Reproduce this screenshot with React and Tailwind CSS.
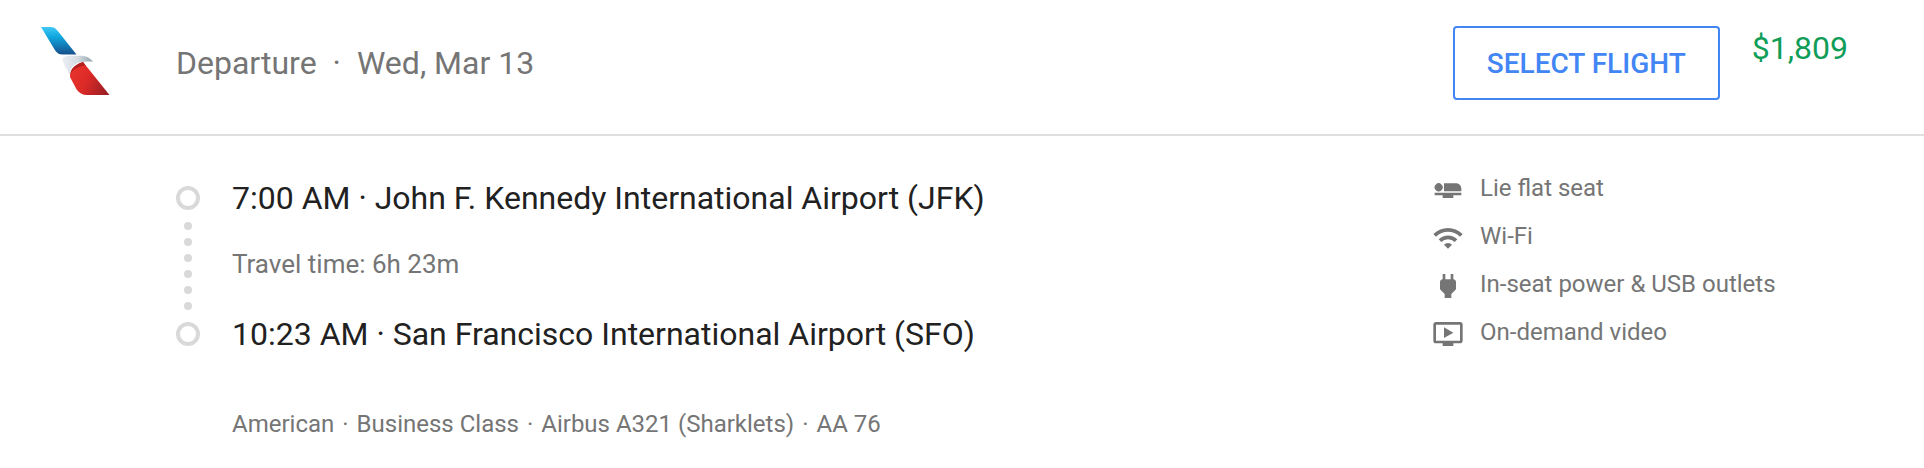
import React from "react";
import {
  MdAirlineSeatFlat,
  MdOndemandVideo,
  MdPower,
  MdWifi,
} from "react-icons/md";

const flight = {
  date: "Wed, Mar 13",
  price: "$1,809",
  departure: "7:00 AM · John F. Kennedy International Airport (JFK)",
  duration: "Travel time: 6h 23m",
  arrival: "10:23 AM · San Francisco International Airport (SFO)",
  details: ["American", "Business Class", "Airbus A321 (Sharklets)", "AA 76"],
};

const amenities = [
  { label: "Lie flat seat", icon: MdAirlineSeatFlat },
  { label: "Wi-Fi", icon: MdWifi },
  { label: "In-seat power & USB outlets", icon: MdPower },
  { label: "On-demand video", icon: MdOndemandVideo },
];

const AirlineLogo = () => (
  <svg
    viewBox="0 0 70 70"
    className="w-[70px] h-[70px] shrink-0"
    role="img"
    aria-label="American Airlines"
  >
    <defs>
      <linearGradient id="blue" x1="0" y1="0" x2="0" y2="1">
        <stop offset="0" stopColor="#3fc8f4" />
        <stop offset="0.35" stopColor="#10a8e0" />
        <stop offset="1" stopColor="#164f8c" />
      </linearGradient>
      <linearGradient id="silver" x1="0" y1="0" x2="1" y2="0">
        <stop offset="0" stopColor="#e9eef3" />
        <stop offset="0.5" stopColor="#d5dde3" />
        <stop offset="1" stopColor="#90a2aa" />
      </linearGradient>
      <linearGradient id="red" x1="0" y1="0.3" x2="1" y2="0.7">
        <stop offset="0" stopColor="#e8332c" />
        <stop offset="0.45" stopColor="#dc2a27" />
        <stop offset="1" stopColor="#9c1f24" />
      </linearGradient>
    </defs>
    <path
      d="M1 1h9.500c3.200 0 5.500 1.500 7.500 4.300L36.500 28.500H22.500c-3.500 0-5.600-1.400-7.500-4.200z"
      fill="url(#blue)"
    />
    <path
      d="M43 36L69.500 69H47c-4.500 0-8-2-10.500-5.800L30 51c-.6-7 5-12 13-15z"
      fill="url(#red)"
    />
    <path d="M30 49c1-7 5.500-11 13-13l2.500 3.500C37 40.500 32 44 30 49z" fill="#b3201f" />
    <path
      d="M22.500 33.500c0-2.500 3-3.800 8.500-3.800h9c6 0 10 2 13 6-7-.5-14-.2-18 2.800-3.500 2.500-5 6-5 10.500l-6.300-11.500c-.8-1.500-1.200-2.700-1.200-4z"
      fill="url(#silver)"
    />
  </svg>
);

const Stop = () => (
  <span className="size-6 rounded-full border-4 border-[#d9d9d9]"></span>
);

const App = () => {
  return (
    <main className="min-h-screen bg-white font-[Roboto,sans-serif] text-[#757575]">
      {/* Header */}
      <header className="flex items-start border-b-2 border-[#e0e0e0] pt-[26px] pb-[34px] pl-10 pr-[76px]">
        <AirlineLogo />
        <h2 className="ml-[66px] mt-[17px] flex gap-4 text-[32px] leading-10">
          <span>Departure</span>
          <span>·</span>
          <span>{flight.date}</span>
        </h2>
        <button
          type="button"
          className="ml-auto cursor-pointer rounded border-2 border-[#4285f4] px-8 pt-4 pb-3.5 text-[28px] leading-10 font-medium text-[#4285f4]"
        >
          SELECT FLIGHT
        </button>
        <p className="ml-8 mt-0.5 text-[32px] leading-10 text-[#0f9d58]">
          {flight.price}
        </p>
      </header>

      {/* Flight leg */}
      <section className="flex items-start pt-[38px] pl-44 pr-10">
        <div className="mt-3 flex flex-col items-center gap-3">
          <Stop />
          <div className="flex flex-col gap-2">
            {[...Array(6)].map((_, i) => (
              <span key={i} className="size-2 rounded-full bg-[#d9d9d9]"></span>
            ))}
          </div>
          <Stop />
        </div>

        <div className="ml-8 mt-1 flex-1">
          <h3 className="text-[32px] leading-10 text-[#212121]">{flight.departure}</h3>
          <p className="mt-[30px] mb-[34px] text-[26px] leading-8">{flight.duration}</p>
          <h3 className="text-[32px] leading-10 text-[#212121]">{flight.arrival}</h3>
          <p className="mt-[54px] flex gap-2 text-[24px] leading-8">
            {flight.details.map((detail, i) => (
              <React.Fragment key={detail}>
                {i > 0 && <span>·</span>}
                <span>{detail}</span>
              </React.Fragment>
            ))}
          </p>
        </div>

        {/* Amenities */}
        <ul className="flex w-[452px] flex-col gap-4">
          {amenities.map(({ label, icon: Icon }) => (
            <li key={label} className="flex items-start gap-4">
              <Icon className="size-8 shrink-0" />
              <span className="text-[24px] leading-7">{label}</span>
            </li>
          ))}
        </ul>
      </section>
    </main>
  );
};

export default App;
